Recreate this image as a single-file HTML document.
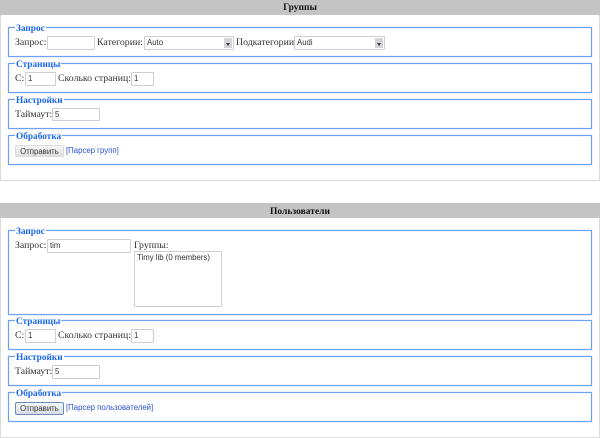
<!DOCTYPE html>
<html><head><meta charset="utf-8">
<style>
html,body{margin:0;padding:0;background:#fff;}
body{width:600px;height:438px;position:relative;overflow:hidden;font-family:"Liberation Serif",serif;font-size:9.8px;color:#333;}
.a{position:absolute;white-space:nowrap;line-height:12px;}
.hd{position:absolute;left:0;width:600px;background:#c4c4c4;text-align:center;font-weight:bold;color:#111;font-size:9.5px;}
.panel{position:absolute;left:0;width:598px;border:1px solid #dcdcdc;border-top:0;}
.fs{position:absolute;left:8px;width:582px;border:1px solid #6ea0f5;box-shadow:0 0 1px #8fb8fa,inset 0 0 1px #a8c6fa;box-sizing:content-box;}
.lg{position:absolute;left:15px;background:#fff;color:#1a66ee;font-weight:bold;font-size:9.3px;padding:0 1px;line-height:12px;white-space:nowrap;}
.in{position:absolute;box-sizing:border-box;border:1px solid #cfcfcf;background:#fff;font-family:"Liberation Sans",sans-serif;font-size:7.8px;color:#333;padding-left:2px;border-radius:1px;white-space:nowrap;overflow:hidden;}
.arrow{position:absolute;top:1px;right:1px;bottom:1px;width:8px;background:#d3d3d8;}
.arrow:after{content:"";position:absolute;left:2px;top:5px;border:2px solid transparent;border-top:3px solid #333;}
.btn{position:absolute;box-sizing:border-box;background:linear-gradient(#f8f8f8,#dedede);border:1px solid #dcdcdc;border-radius:2px;font-family:"Liberation Sans",sans-serif;font-size:7.8px;color:#333;text-align:center;}
.lnk{position:absolute;font-family:"Liberation Sans",sans-serif;font-size:7.8px;color:#2a4fd0;white-space:nowrap;line-height:12px;}
</style></head><body>

<div class="hd" style="top:0;height:15px;line-height:17px;">Группы</div>
<div class="panel" style="top:15px;height:165px;"></div>

<div class="fs" style="top:27px;height:28px;"></div><div class="lg" style="top:23px;">Запрос</div>
<div class="a" style="left:15px;top:37px;">Запрос:</div>
<div class="in" style="left:47px;top:36px;width:48px;height:14px;"></div>
<div class="a" style="left:97px;top:37px;">Категории:</div>
<div class="in" style="left:144px;top:36px;width:90px;height:14px;line-height:12px;">Auto<span class="arrow"></span></div>
<div class="a" style="left:236px;top:37px;">Подкатегории:</div>
<div class="in" style="left:294px;top:36px;width:91px;height:14px;line-height:12px;">Audi<span class="arrow"></span></div>

<div class="fs" style="top:63px;height:28px;"></div><div class="lg" style="top:59px;">Страницы</div>
<div class="a" style="left:15px;top:73px;">С:</div>
<div class="in" style="left:25px;top:72px;width:31px;height:14px;line-height:12px;">1</div>
<div class="a" style="left:58px;top:73px;">Сколько страниц:</div>
<div class="in" style="left:131px;top:72px;width:23px;height:14px;line-height:12px;">1</div>

<div class="fs" style="top:99px;height:28px;"></div><div class="lg" style="top:95px;">Настройки</div>
<div class="a" style="left:15px;top:109px;">Таймаут:</div>
<div class="in" style="left:52px;top:108px;width:48px;height:13px;line-height:11px;">5</div>

<div class="fs" style="top:135px;height:28px;"></div><div class="lg" style="top:131px;">Обработка</div>
<div class="btn" style="left:15px;top:145px;width:49px;height:12px;line-height:11px;">Отправить</div>
<div class="lnk" style="left:66px;top:145px;">[Парсер групп]</div>


<div class="hd" style="top:203px;height:15px;line-height:18px;">Пользователи</div>
<div class="panel" style="top:218px;height:219px;"></div>

<div class="fs" style="top:230px;height:83px;"></div><div class="lg" style="top:226px;">Запрос</div>
<div class="a" style="left:15px;top:240px;">Запрос:</div>
<div class="in" style="left:47px;top:239px;width:84px;height:14px;line-height:12px;">tim</div>
<div class="a" style="left:134px;top:240px;">Группы:</div>
<div class="in" style="left:134px;top:251px;width:88px;height:56px;line-height:12px;">Timy lib (0 members)</div>

<div class="fs" style="top:320px;height:28px;"></div><div class="lg" style="top:316px;">Страницы</div>
<div class="a" style="left:15px;top:330px;">С:</div>
<div class="in" style="left:25px;top:329px;width:31px;height:14px;line-height:12px;">1</div>
<div class="a" style="left:58px;top:330px;">Сколько страниц:</div>
<div class="in" style="left:131px;top:329px;width:23px;height:14px;line-height:12px;">1</div>

<div class="fs" style="top:356px;height:28px;"></div><div class="lg" style="top:352px;">Настройки</div>
<div class="a" style="left:15px;top:366px;">Таймаут:</div>
<div class="in" style="left:52px;top:365px;width:48px;height:14px;line-height:12px;">5</div>

<div class="fs" style="top:392px;height:28px;"></div><div class="lg" style="top:388px;">Обработка</div>
<div class="btn" style="left:15px;top:402px;width:49px;height:13px;line-height:11px;border-color:#6d8db0;background:linear-gradient(#f4f6f9,#d5dde6);">Отправить</div>
<div class="lnk" style="left:66px;top:402px;">[Парсер пользователей]</div>

</body></html>
